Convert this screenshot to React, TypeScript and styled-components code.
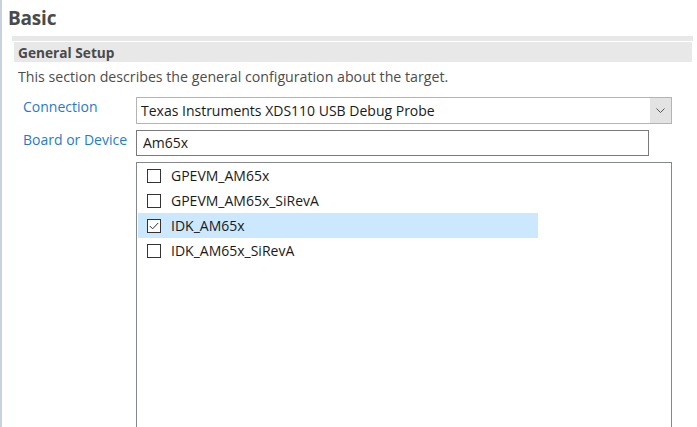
import React from "react";
import styled, { createGlobalStyle } from "styled-components";

const GlobalStyle = createGlobalStyle`
  html, body {
    margin: 0;
    padding: 0;
    background: #ffffff;
  }
  body {
    font-family: "Open Sans", "Noto Sans", "Liberation Sans", sans-serif;
    color: #444444;
  }
`;

const Page = styled.div`
  height: 427px;
  overflow: hidden;
  border-left: 2px solid #c9d0de;
  box-sizing: border-box;
`;

const Title = styled.h1`
  margin: 0;
  padding: 7px 0 0 6px;
  height: 29px;
  box-sizing: border-box;
  font-size: 19px;
  line-height: 22px;
  font-weight: 700;
  color: #4a4a4a;
  letter-spacing: -0.2px;
`;

const Section = styled.section`
  margin: 7px 4px 0 10px;
`;

const TopRule = styled.div`
  height: 5px;
  background: #e8e8e8;
`;

const SectionHeader = styled.div`
  margin: 1px 1px 0 2px;
  height: 20px;
  padding-left: 4px;
  background: #e8e8e8;
  font-size: 13.7px;
  line-height: 21px;
  font-weight: 700;
  color: #4a4a4a;
`;

const Description = styled.p`
  margin: 4px 0 0 6px;
  font-size: 14.2px;
  line-height: 22px;
  color: #4d4d4d;
`;

const Form = styled.div`
  display: grid;
  grid-template-columns: 113px 1fr;
  row-gap: 6px;
  padding: 9px 25px 0 21px;
`;

const Label = styled.label`
  font-size: 14px;
  line-height: 20px;
  color: #1f7bd0;
`;

const Combo = styled.div`
  display: flex;
  height: 27px;
  border: 1px solid #b4b4b4;
  box-sizing: border-box;
  background: #ffffff;
`;

const ComboText = styled.div`
  flex: 1;
  padding-left: 4px;
  font-size: 14px;
  line-height: 25px;
  color: #1a1a1a;
`;

const ComboButton = styled.div`
  width: 21px;
  background: #e3e3e3;
  display: flex;
  align-items: center;
  justify-content: center;
`;

const TextBox = styled.div`
  height: 26px;
  margin-right: 23px;
  border: 1px solid #7a7a7a;
  box-sizing: border-box;
  padding-left: 6px;
  font-size: 14px;
  line-height: 24px;
  color: #1a1a1a;
`;

const ListBox = styled.div`
  grid-column: 2;
  height: 290px;
  border: 1px solid #828790;
  box-sizing: border-box;
  padding: 0 0 0 1px;
`;

const Item = styled.div<{ $selected?: boolean }>`
  display: flex;
  align-items: center;
  width: 400px;
  height: 25px;
  padding-left: 9px;
  box-sizing: border-box;
  background: ${(p) => (p.$selected ? "#cce8ff" : "transparent")};
  font-size: 14px;
  color: #1a1a1a;
`;

const Box = styled.span`
  width: 14px;
  height: 14px;
  border: 1px solid #333333;
  box-sizing: border-box;
  margin-right: 10px;
  display: flex;
  align-items: center;
  justify-content: center;
  background: #ffffff;
`;

const boards = [
  { name: "GPEVM_AM65x", checked: false },
  { name: "GPEVM_AM65x_SiRevA", checked: false },
  { name: "IDK_AM65x", checked: true },
  { name: "IDK_AM65x_SiRevA", checked: false },
];

const App = () => {
  return (
    <Page>
      <GlobalStyle />
      <Title>Basic</Title>
      <Section>
        <TopRule />
        <SectionHeader>General Setup</SectionHeader>
        <Description>
          This section describes the general configuration about the target.
        </Description>
      </Section>
      <Form>
        <Label>Connection</Label>
        <Combo>
          <ComboText>Texas Instruments XDS110 USB Debug Probe</ComboText>
          <ComboButton>
            <svg width="9" height="5" viewBox="0 0 9 5">
              <path d="M0.5 0.5 L4.5 4.5 L8.5 0.5" fill="none" stroke="#555" strokeWidth="1" />
            </svg>
          </ComboButton>
        </Combo>
        <Label>Board or Device</Label>
        <TextBox>Am65x</TextBox>
        <ListBox>
          {boards.map((b) => (
            <Item key={b.name} $selected={b.checked}>
              <Box>
                {b.checked && (
                  <svg width="10" height="8" viewBox="0 0 10 8">
                    <path d="M0.8 4 L3.6 6.8 L9.2 1" fill="none" stroke="#333" strokeWidth="1" />
                  </svg>
                )}
              </Box>
              {b.name}
            </Item>
          ))}
        </ListBox>
      </Form>
    </Page>
  );
};

export default App;
